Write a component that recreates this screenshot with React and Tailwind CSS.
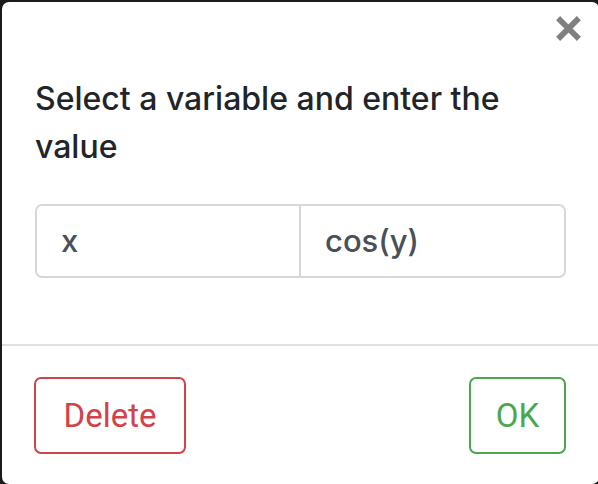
import React, { useState } from 'react'

export default function App() {
  const [variable, setVariable] = useState('x')
  const [value, setValue] = useState('cos(y)')

  return (
    <div className="w-[598px] h-[484px] bg-[#1b1b1b] pt-[2px] pl-[2px] overflow-hidden">
      <div className="w-[597px] h-[482px] bg-white rounded-[7px] flex flex-col" style={{ fontFamily: 'Inter, "Noto Sans", sans-serif' }}>
        <div className="flex justify-end pt-[14px] pr-[18px]">
          <button className="w-[25px] h-[25px] flex items-center justify-center">
            <svg width="25" height="25" viewBox="0 0 24 24">
              <path d="M4 4 L20 20 M20 4 L4 20" stroke="#808080" strokeWidth="5.5" strokeLinecap="square" />
            </svg>
          </button>
        </div>

        <div className="px-[33px] pt-[34px]">
          <h2 className="text-[32px] leading-[48px] font-medium text-[#212529]">
            Select a variable and enter the value
          </h2>

          <div className="mt-[33px] flex h-[74px] border-2 border-[#d4d8dc] rounded-[7px]">
            <input
              value={variable}
              onChange={(e) => setVariable(e.target.value)}
              className="w-[264px] px-[24px] text-[31px] font-medium text-[#495057] outline-none bg-transparent border-r-2 border-[#d4d8dc]"
            />
            <input
              value={value}
              onChange={(e) => setValue(e.target.value)}
              className="flex-1 min-w-0 px-[24px] text-[31px] font-medium text-[#495057] outline-none bg-transparent"
            />
          </div>
        </div>

        <div className="mt-[66px] border-t-2 border-[#dee2e6]"></div>

        <div className="flex justify-between pl-[32px] pr-[33px] pt-[31px]" style={{ fontFamily: 'Roboto, "Noto Sans", sans-serif' }}>
          <button className="w-[152px] h-[77px] border-2 border-[#d0434b] rounded-[7px] text-[#d0434b] text-[33px]">
            Delete
          </button>
          <button className="w-[97px] h-[77px] border-2 border-[#4ba650] rounded-[7px] text-[#4ba650] text-[33px]">
            OK
          </button>
        </div>
      </div>
    </div>
  )
}
